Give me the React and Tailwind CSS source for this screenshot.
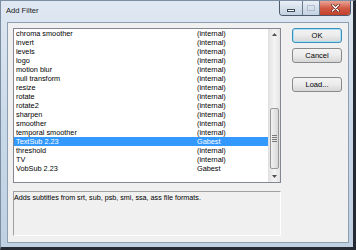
const filters = [
  ["chroma smoother", "(internal)"],
  ["invert", "(internal)"],
  ["levels", "(internal)"],
  ["logo", "(internal)"],
  ["motion blur", "(internal)"],
  ["null transform", "(internal)"],
  ["resize", "(internal)"],
  ["rotate", "(internal)"],
  ["rotate2", "(internal)"],
  ["sharpen", "(internal)"],
  ["smoother", "(internal)"],
  ["temporal smoother", "(internal)"],
  ["TextSub 2.23", "Gabest"],
  ["threshold", "(internal)"],
  ["TV", "(internal)"],
  ["VobSub 2.23", "Gabest"],
];

const CaptionButtons = () => (
  <div className="flex h-[15px] mr-[2px] rounded-b-[4px] border border-t-0 border-[#4d5a6b] overflow-hidden">
    <div className="w-[23px] h-full bg-gradient-to-b from-[#e9eff6] to-[#c3d1e1] border-r border-[#6b7a8c] flex items-center justify-center">
      <div className="w-[8px] h-[3px] mt-[4px] bg-white border border-[#3c4858]" />
    </div>
    <div className="w-[17px] h-full bg-gradient-to-b from-[#e9eff6] to-[#c3d1e1] border-r border-[#6b7a8c] flex items-center justify-center">
      <div className="w-[8px] h-[6px] border border-[#9aa7b6] bg-transparent opacity-60" />
    </div>
    <div className="w-[30px] h-full bg-gradient-to-b from-[#e8a597] via-[#d25b45] to-[#c2402b] flex items-center justify-center">
      <svg width="9" height="8" viewBox="0 0 9 8">
        <path d="M1.5 1 L7.5 7 M7.5 1 L1.5 7" stroke="#5a2018" strokeWidth="2.6" strokeLinecap="round" />
        <path d="M1.5 1 L7.5 7 M7.5 1 L1.5 7" stroke="#ffffff" strokeWidth="1.4" strokeLinecap="round" />
      </svg>
    </div>
  </div>
);

const Button = ({ children, primary, className = "" }) => (
  <div
    className={`w-[50px] h-[15px] rounded-[3px] border flex items-center justify-center text-[7.5px] leading-none text-black bg-gradient-to-b from-[#f4f4f4] via-[#ebebeb] to-[#d6d6d6] ${
      primary ? "border-[#3c8fb8] shadow-[inset_0_0_0_1px_#a8e0f4]" : "border-[#8a8a8a]"
    } ${className}`}
  >
    {children}
  </div>
);

const ScrollBar = () => (
  <div className="w-[12px] h-full bg-gradient-to-r from-[#e4e4e4] via-[#f4f4f4] to-[#e4e4e4] border-l border-[#e0e0e0] flex flex-col">
    <div className="h-[11px] flex items-center justify-center">
      <svg width="5" height="3" viewBox="0 0 5 3">
        <path d="M0 3 L2.5 0 L5 3 Z" fill="#505050" />
      </svg>
    </div>
    <div className="h-[68px]" />
    <div className="h-[61px] mx-[1px] rounded-[2px] border border-[#989898] bg-gradient-to-r from-[#f2f2f2] to-[#d8d8d8] flex flex-col items-center justify-center gap-[1px]">
      <div className="w-[5px] h-[1px] bg-[#7a7a7a]" />
      <div className="w-[5px] h-[1px] bg-[#7a7a7a]" />
      <div className="w-[5px] h-[1px] bg-[#7a7a7a]" />
      <div className="w-[5px] h-[1px] bg-[#7a7a7a]" />
    </div>
    <div className="flex-1 flex items-end justify-center pb-[4px]">
      <svg width="5" height="3" viewBox="0 0 5 3">
        <path d="M0 0 L2.5 3 L5 0 Z" fill="#505050" />
      </svg>
    </div>
  </div>
);

export default function App() {
  return (
    <div
      className="w-[356px] h-[250px] flex flex-col bg-gradient-to-b from-[#dfe8f2] via-[#cad9e9] to-[#bfd0e3] border-l border-t border-[#7d8ea3] border-r-[3px] border-b-[3px] border-r-[#262b33] border-b-[#262b33]"
      style={{ fontFamily: '"Liberation Sans", Arial, sans-serif' }}
    >
      <div className="h-[21px] flex justify-between items-start">
        <div className="pl-[5px] pt-[5px] text-[7.6px] leading-[9px] text-[#1b1b1b]">Add Filter</div>
        <CaptionButtons />
      </div>

      <div className="flex-1 ml-[6px] mr-[4px] mb-[4px] bg-[#f0f0f0] border border-[#8e9eb2] flex pl-[5px] pt-[5px] pr-[6px]">
        <div className="w-[268px] flex flex-col">
          <div className="h-[155px] border border-[#828790] bg-white flex">
            <div className="flex-1 pt-[0px]">
              {filters.map(([name, author]) => {
                const selected = name === "TextSub 2.23";
                return (
                  <div
                    key={name}
                    className={`h-[9px] leading-[9px] text-[7.3px] flex ${
                      selected ? "bg-[#3399ff] text-white" : "text-black"
                    }`}
                  >
                    <div className="w-[183px] pl-[2px] whitespace-nowrap">{name}</div>
                    <div className="whitespace-nowrap">{author}</div>
                  </div>
                );
              })}
            </div>
            <ScrollBar />
          </div>

          <div className="mt-[8px] h-[45px] border border-t-[#a0a0a0] border-l-[#a0a0a0] border-r-white border-b-white bg-[#f0f0f0] pl-[0px] pt-[1px] text-[7.2px] leading-[9px] text-black whitespace-nowrap">
            Adds subtitles from srt, sub, psb, smi, ssa, ass file formats.
          </div>
        </div>

        <div className="ml-[11px] flex flex-col">
          <Button primary>OK</Button>
          <Button className="mt-[5px]">Cancel</Button>
          <Button className="mt-[14px]">Load...</Button>
        </div>
      </div>
    </div>
  );
}
